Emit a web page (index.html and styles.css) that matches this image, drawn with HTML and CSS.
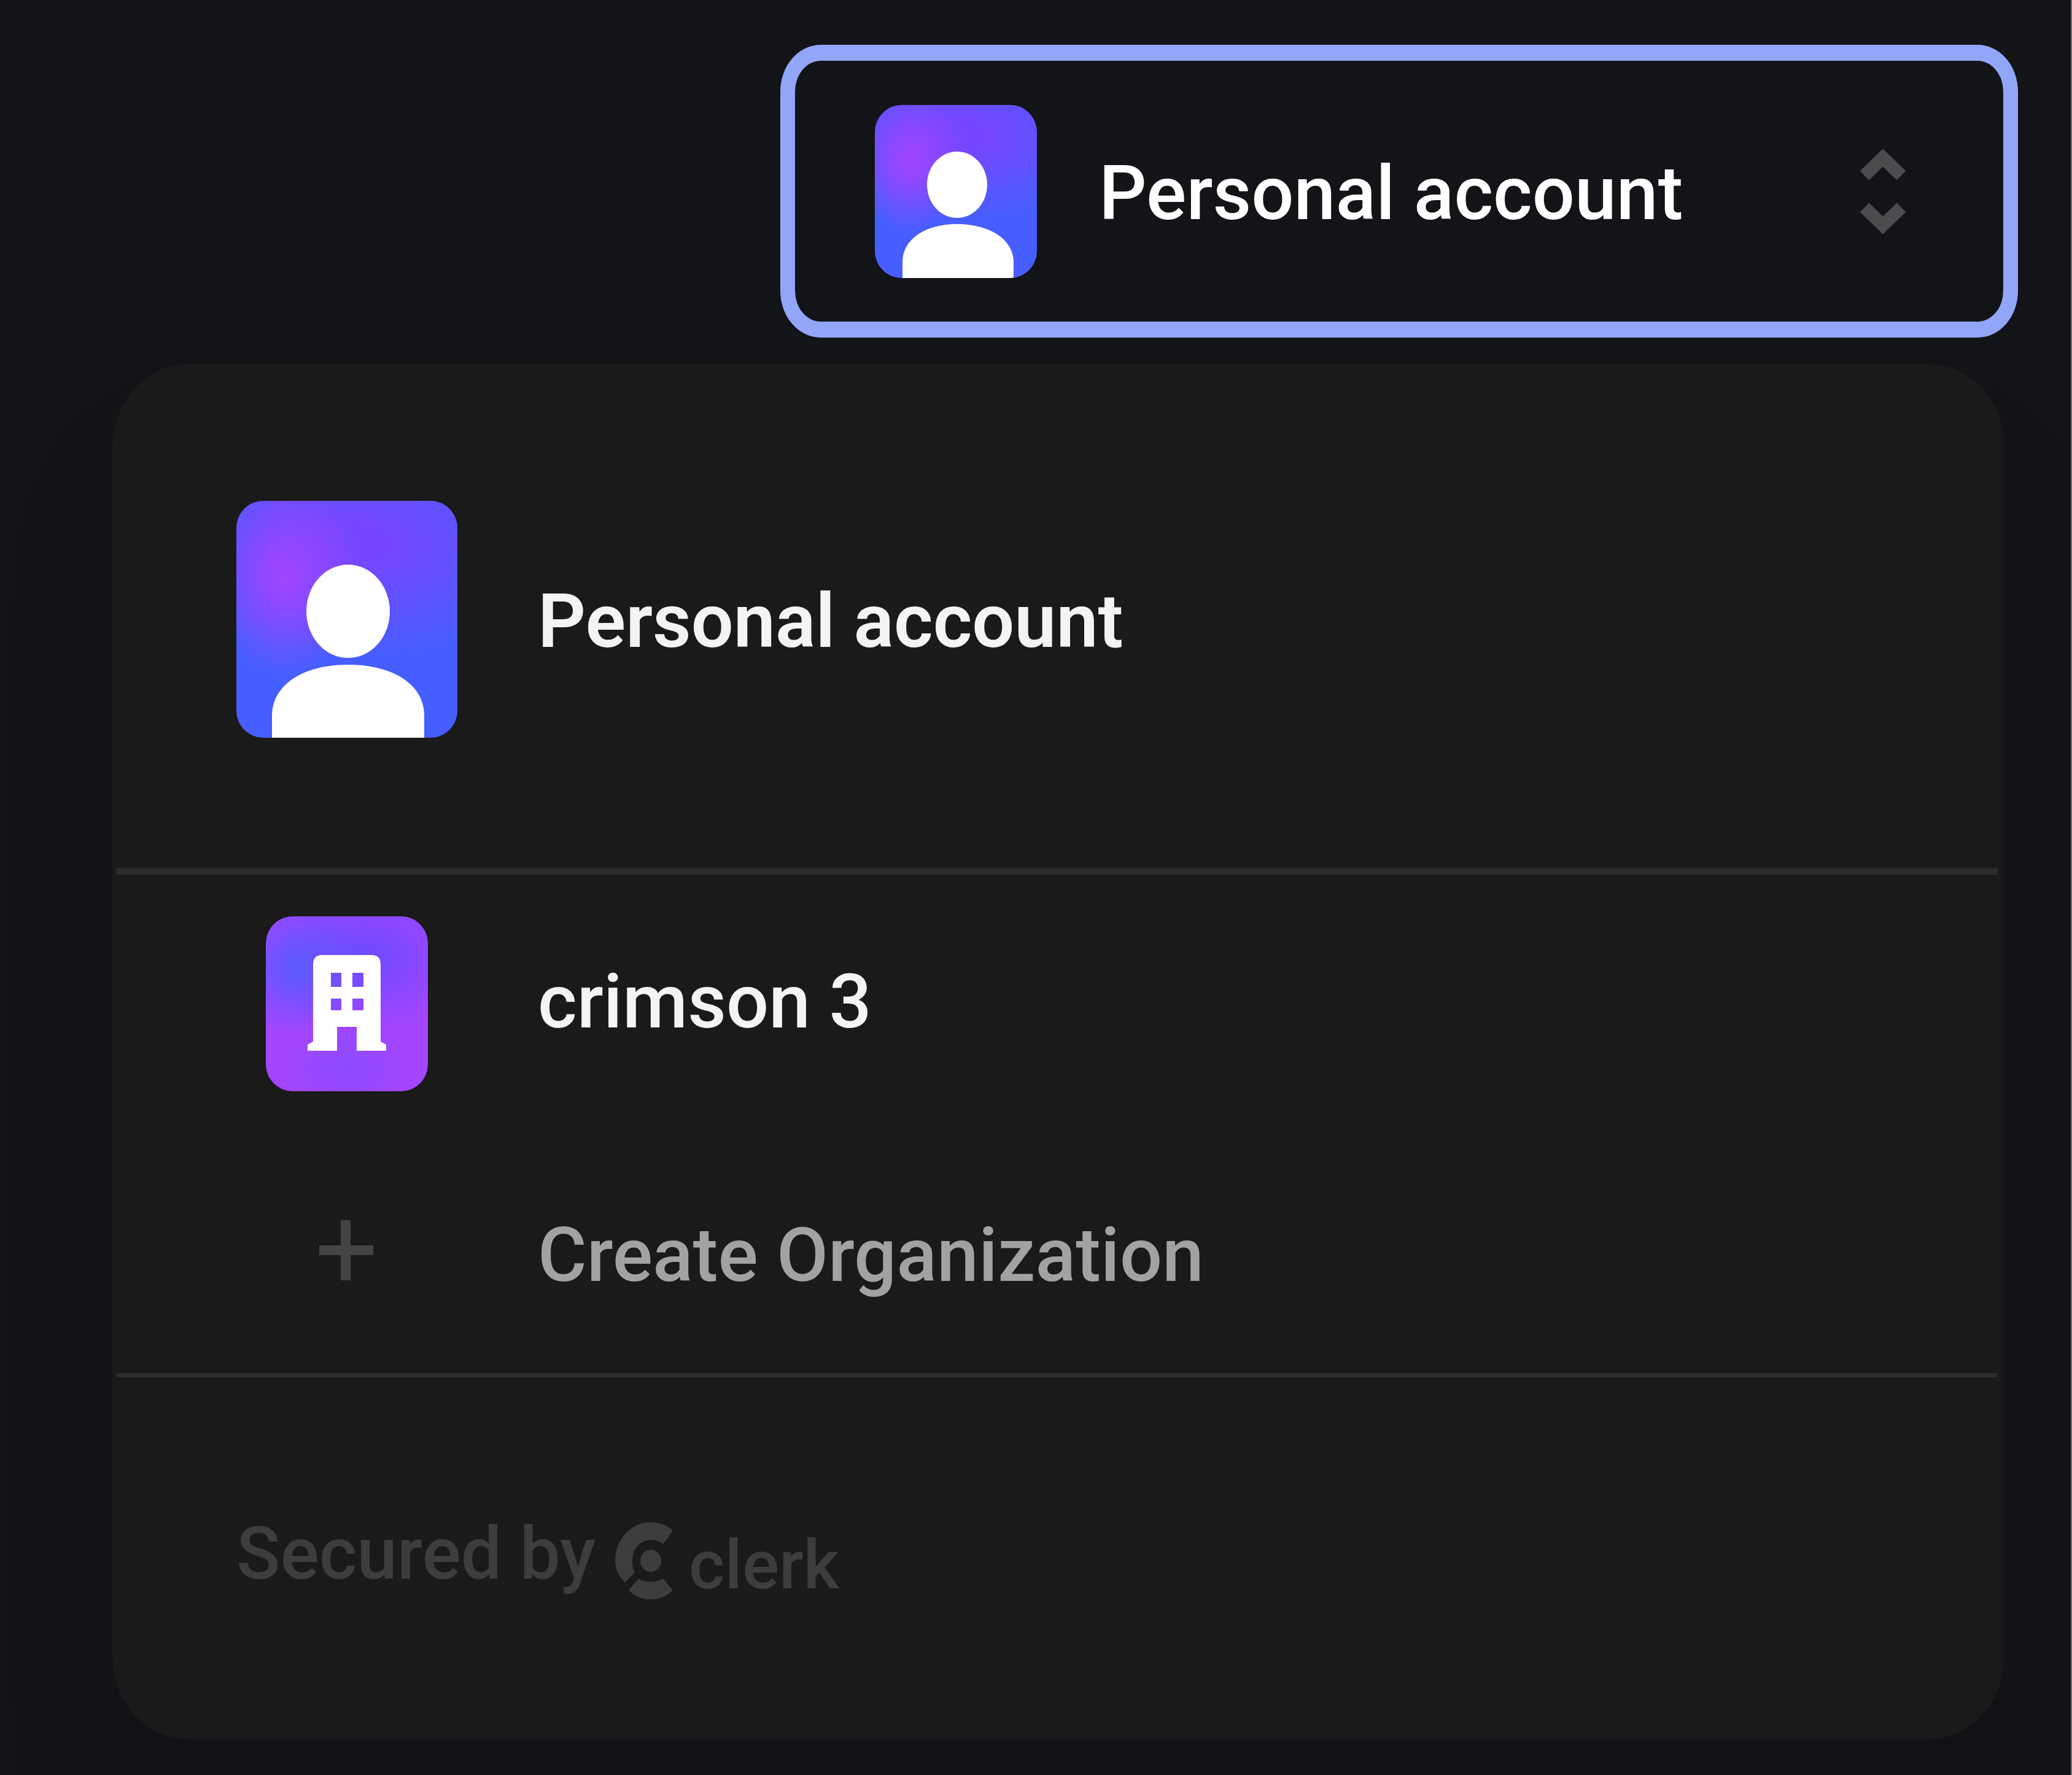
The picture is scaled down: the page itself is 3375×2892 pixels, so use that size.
FILE: index.html
```
<!DOCTYPE html>
<html lang="en">
<head>
  <meta charset="utf-8">
  <title>Organization switcher</title>
  <link rel="stylesheet" href="styles.css">
</head>
<body>
  <main class="page">
    <button class="trigger" type="button" aria-haspopup="true" aria-expanded="true">
      <svg class="avatar avatar-user" viewBox="0 0 264 282" aria-hidden="true">
        <ellipse cx="134" cy="130" rx="49" ry="54"/>
        <path d="M45 282V256C45 220 80 194 134 194S226 220 226 256V282Z"/>
      </svg>
      <span class="label">Personal account</span>
      <svg class="chevrons" viewBox="0 0 76 142" aria-hidden="true">
        <path d="M8 45L38 16L68 45M8 97L38 126L68 97"/>
      </svg>
    </button>

    <section class="card" aria-label="Switch account">
      <div class="current">
        <svg class="avatar avatar-user avatar-large" viewBox="0 0 360 386" aria-hidden="true">
          <ellipse cx="182" cy="180" rx="68" ry="76"/>
          <path d="M58 386V350C58 300 108 267 182 267S306 300 306 350V386Z"/>
        </svg>
        <span class="label label-current">Personal account</span>
      </div>

      <button class="item item-org" type="button">
        <span class="slot">
          <svg class="avatar avatar-org" viewBox="0 0 264 285" aria-hidden="true">
            <path fill-rule="evenodd" d="M92 63H172Q187 63 187 78V204L196 209V219H148V180H116V219H68V209L77 204V78Q77 63 92 63ZM106 92H123V115H106ZM141 92H159V115H141ZM106 134H123V153H106ZM141 134H159V153H141Z"/>
          </svg>
        </span>
        <span class="label">crimson 3</span>
      </button>

      <button class="item item-create" type="button">
        <span class="slot">
          <svg class="plus" viewBox="0 0 90 110" aria-hidden="true">
            <path d="M43 1V99M0 50H88"/>
          </svg>
        </span>
        <span class="label">Create Organization</span>
      </button>

      <footer class="footer">
        <span class="secured">Secured by</span>
        <a class="brand" href="#">
          <svg class="brand-mark" viewBox="0 0 96 126" aria-hidden="true">
            <path d="M94 14C84 5 72 0 58 0C26 0 0 28 0 63C0 77 6 89 16 98L32 82C29 77 28 70 28 63C28 44 41 29 58 29C66 29 73 31 78 36Z"/>
            <ellipse cx="58" cy="63" rx="17" ry="18"/>
            <path d="M38 92C50 99 66 99 78 92L94 111C85 120 72 126 58 126S31 120 22 111Z"/>
          </svg>
          <span class="brand-name">clerk</span>
        </a>
      </footer>
    </section>
  </main>
</body>
</html>
```
FILE: styles.css
```
* {
  box-sizing: border-box;
}

body {
  margin: 0;
  background: #131418;
  color: #f4f4f4;
  font-family: Roboto, "Liberation Sans", sans-serif;
}

button {
  font: inherit;
  color: inherit;
  text-align: left;
  background: none;
  border: 0;
  padding: 0;
  cursor: pointer;
}

svg {
  display: block;
  flex: none;
}

.page {
  display: flex;
  flex-direction: column;
  gap: 43px;
  min-height: 100vh;
  padding: 73px 108px 58px 183px;
  border-right: 2px solid #6f7072;
  overflow: hidden;
}

/* Trigger */
.trigger {
  display: flex;
  align-items: center;
  align-self: flex-end;
  width: 2016px;
  max-width: 100%;
  height: 477px;
  margin-right: -22px;
  padding: 0 158px 0 130px;
  border: 26px solid #92a6f8;
  border-width: 26px 24px;
  border-radius: 66px / 76px;
}

.trigger .label {
  flex: 1;
  margin-left: 101px;
  color: #fff;
}

.label {
  padding-top: 8px;
  font-size: 122px;
  line-height: 144px;
  font-weight: 500;
  white-space: nowrap;
}

.chevrons {
  width: 76px;
  height: 142px;
  fill: none;
  stroke: #4b4c4e;
  stroke-width: 21px;
}

/* Avatars */
.avatar {
  width: 264px;
  height: 282px;
  border-radius: 44px;
  fill: #fff;
}

.avatar-user {
  background:
    radial-gradient(ellipse 34% 42% at 22% 32%, #a344ff, #a344ff00),
    radial-gradient(ellipse 85% 48% at 55% 18%, #7447ff 20%, #7447ff00),
    #465eff;
}

.avatar-large {
  width: 360px;
  height: 386px;
}

.avatar-org {
  height: 285px;
  background:
    radial-gradient(ellipse 42% 38% at 20% 30%, #5a5aff, #5a5aff00),
    radial-gradient(ellipse 62% 42% at 60% 24%, #6a4aff, #6a4aff00),
    radial-gradient(ellipse 40% 26% at 50% 86%, #8b4bff, #8b4bff00),
    #a445ff;
}

/* Popover card */
.card {
  padding: 0 11px 0 7px;
  background: #1a1a1a;
  border-radius: 124px / 136px;
  box-shadow: 0 160px 200px #0000001a;
}

.current {
  display: flex;
  align-items: center;
  gap: 131px;
  height: 832px;
  padding: 11px 195px 0;
  border-bottom: 11px solid #2b2b2b;
}

.label-current {
  font-weight: 600;
}

.item {
  display: flex;
  align-items: center;
  gap: 131px;
  width: 100%;
  padding: 0 195px;
}

.slot {
  display: flex;
  flex: none;
  justify-content: center;
  width: 360px;
}

.item-org {
  height: 421px;
}

.item-org .label {
  padding-bottom: 14px;
}

.item-create {
  height: 398px;
  border-bottom: 7px solid #2b2b2b;
  color: #a2a2a2;
}

.plus {
  width: 90px;
  height: 110px;
  fill: none;
  stroke: #444;
  stroke-width: 16px;
}

.footer {
  display: flex;
  align-items: center;
  gap: 32px;
  height: 590px;
  padding: 0 195px;
  color: #3d3d3d;
}

.secured {
  padding-bottom: 14px;
  font-size: 118px;
  line-height: 144px;
  font-weight: 500;
}

.brand {
  display: flex;
  align-items: center;
  gap: 24px;
  padding-top: 8px;
  color: inherit;
  text-decoration: none;
}

.brand-mark {
  width: 96px;
  height: 126px;
  fill: currentColor;
}

.brand-name {
  padding-top: 14px;
  font-size: 112px;
  line-height: 144px;
  font-weight: 500;
}
```
